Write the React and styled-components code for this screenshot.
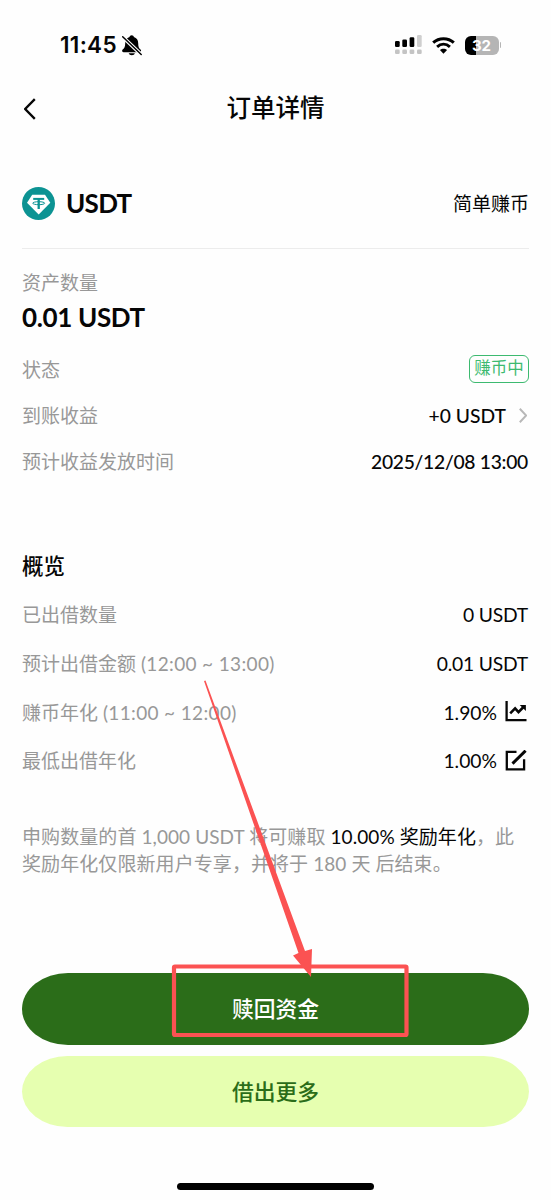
import React from "react";
import styled, { createGlobalStyle } from "styled-components";

const GlobalStyle = createGlobalStyle`
  * {
    box-sizing: border-box;
  }

  body {
    margin: 0;
    background: #fefefe;
    color: #060606;
    font-family: Lato, "Noto Sans CJK SC", sans-serif;
  }
`;

const Screen = styled.div`
  position: relative;
  display: flex;
  flex-direction: column;
  width: 551px;
  height: 1200px;
  padding: 0 22px;
  overflow: hidden;
`;

const StatusBar = styled.div`
  display: flex;
  align-items: center;
  justify-content: space-between;
  height: 90px;
  padding: 0 28px 0 38px;
`;

const StatusGroup = styled.div`
  display: flex;
  align-items: center;
  gap: ${(props) => props.$gap}px;
`;

const Time = styled.span`
  font-family: Inter, sans-serif;
  font-size: 22.5px;
  font-weight: 600;
  letter-spacing: 0.3px;
  line-height: 28px;
`;

const Battery = styled.div`
  display: flex;
  align-items: center;
  justify-content: center;
  width: 34px;
  height: 19px;
  border-radius: 6px;
  background: linear-gradient(to right, #000 11px, #b5b5b5 11px);
  color: #fff;
  font-family: Inter, sans-serif;
  font-size: 15px;
  font-weight: 700;
`;

const BatteryTip = styled.div`
  width: 1.5px;
  height: 6px;
  margin-left: 1px;
  border-radius: 0 2px 2px 0;
  background: #b5b5b5;
`;

const BatteryGroup = styled.div`
  display: flex;
  align-items: center;
`;

const NavBar = styled.header`
  display: grid;
  grid-template-columns: 60px 1fr 60px;
  align-items: center;
  height: 36px;
  margin-bottom: 32px;
`;

const BackButton = styled.button`
  display: flex;
  padding: 1px 0 0 2px;
  border: 0;
  background: none;
`;

const PageTitle = styled.h1`
  margin: 0;
  font-size: 24.5px;
  font-weight: 500;
  line-height: 34px;
  text-align: center;
`;

const AssetHeader = styled.div`
  display: flex;
  align-items: center;
  height: 91px;
  border-bottom: 1px solid #ececec;
`;

const AssetName = styled.span`
  flex: 1;
  margin-left: 11px;
  font-size: 26px;
  font-weight: 700;
  letter-spacing: -0.7px;
`;

const ProductName = styled.span`
  padding-bottom: 2px;
  font-size: 19px;
`;

const Label = styled.span`
  color: #989898;
  font-size: 19px;
`;

const TimeRange = styled.span`
  letter-spacing: 0.35px;
`;

const AmountBlock = styled.div`
  display: flex;
  flex-direction: column;
  margin: 20px 0 9px;

  ${Label} {
    line-height: 28px;
  }
`;

const Amount = styled.span`
  font-size: 26px;
  font-weight: 700;
  letter-spacing: -0.35px;
  line-height: 40px;
`;

const Rows = styled.div`
  display: flex;
  flex-direction: column;

  ${Label} {
    padding-bottom: 2px;
  }
`;

const Row = styled.div`
  display: flex;
  align-items: center;
  justify-content: space-between;
  height: ${(props) => props.$height}px;
`;

const Value = styled.span`
  display: flex;
  align-items: center;
  gap: ${(props) => props.$gap || 8}px;
  padding-right: ${(props) => props.$inset || 1}px;
  font-size: 19.3px;
  font-weight: ${(props) => props.$weight || 400};
  letter-spacing: ${(props) => props.$spacing || 0}px;
`;

const Badge = styled.span`
  height: 28px;
  width: 60px;
  border: 1.5px solid #3dba70;
  border-radius: 6px;
  color: #3dba70;
  font-size: 16.5px;
  line-height: 25px;
  text-align: center;
`;

const SectionTitle = styled.h2`
  margin: 64px 0 8px;
  font-size: 21.5px;
  font-weight: 500;
  line-height: 34px;
`;

const Note = styled.p`
  height: 54px;
  margin: 38px 0 96px;
  color: #989898;
  font-size: 19px;
  letter-spacing: 0.08px;
  line-height: 27px;
  white-space: nowrap;
`;

const Strong = styled.span`
  color: #060606;
`;

const Actions = styled.div`
  display: flex;
  flex-direction: column;
  gap: 11px;
`;

const ActionButton = styled.button`
  height: ${(props) => (props.$primary ? 72 : 71)}px;
  padding: 0 0 3px;
  border: 0;
  border-radius: 46px / 36px;
  background: ${(props) => (props.$primary ? "#2b6d19" : "#e6ffb0")};
  color: ${(props) => (props.$primary ? "#fff" : "#2b6d19")};
  font-family: inherit;
  font-size: 21.8px;
  font-weight: 500;
`;

const HomeIndicator = styled.div`
  align-self: center;
  width: 197px;
  height: 7px;
  margin-top: 56px;
  border-radius: 4px;
  background: #000;
`;

// Red arrow and frame drawn on top of the page
const Annotation = styled.svg`
  position: absolute;
  top: 0;
  left: 0;
  pointer-events: none;
`;

const MutedBell = () => (
  <svg width="20" height="21" viewBox="0 0 20 21">
    <path
      d="M9.700.3c-1.200 0-2 .7-2.200 1.700C4.600 3 3.200 5.200 3.200 8.200c0 3.500-.8 4.900-2.500 6.400-1 .8-.7 2.600.9 2.600h16c1.600 0 1.900-1.800.9-2.600-1.700-1.500-2.300-2.900-2.300-6.400 0-3-1.500-5.200-4.300-6.200C11.700 1 10.900.3 9.700.3z"
      fill="#000"
    />
    <path d="M6.700 18.300h6.200c-.4 1.300-1.500 2-3.100 2S7.100 19.600 6.700 18.300z" fill="#000" />
    <path d="M-.5 .7 20 20.300" stroke="#fefefe" strokeWidth="3.600" />
    <path d="M.7 1.800 19.200 19.500" stroke="#000" strokeWidth="1.500" strokeLinecap="round" />
  </svg>
);

const Signal = () => (
  <svg width="27" height="20" viewBox="0 0 27 20">
    <rect x="0" y="6" width="4.700" height="6" rx="1.300" />
    <rect x="7.300" y="4.500" width="4.700" height="7.500" rx="1.300" />
    <rect x="14.600" y="2.300" width="4.700" height="9.700" rx="1.300" />
    <rect x="22" y="0" width="4.700" height="12" rx="1.300" fill="#cfcfcf" />
    {[0, 7.3, 14.6, 22].map((x) => (
      <rect key={x} x={x} y="14.500" width="4.700" height="4.500" rx="1.300" fill="#c4c4c4" />
    ))}
  </svg>
);

const Wifi = () => (
  <svg width="23" height="17" viewBox="0 0 23 17" fill="none" stroke="#000" strokeWidth="3">
    <path d="M1.200 5.700C7 .3 16 .3 21.800 5.700" />
    <path d="M5.100 9.800C8.900 6.500 14.100 6.500 17.900 9.800" />
    <path d="M11.500 16.700 7.900 13.100C10 11.200 13 11.200 15.100 13.100z" fill="#000" stroke="none" />
  </svg>
);

const Chevron = ({ width, height, color, stroke, flip }) => (
  <svg width={width} height={height} viewBox="0 0 10 20" preserveAspectRatio="none" fill="none">
    <path
      d={flip ? "M1 1l8 9-8 9" : "M9 1l-8 9 8 9"}
      stroke={color}
      strokeWidth={stroke}
      vectorEffect="non-scaling-stroke"
    />
  </svg>
);

const TetherLogo = () => (
  <svg width="33" height="33" viewBox="0 0 33 33">
    <circle cx="16.500" cy="16.500" r="16.500" fill="#0c9393" />
    <path d="M10.200 7.800h12.800l5.300 7.900L16.700 27.500 5 15.700z" fill="#fff" />
    <g fill="none" stroke="#0c9393">
      <path d="M11.200 11.900h11" strokeWidth="2" />
      <path d="M16.700 12v10" strokeWidth="2.300" />
      <ellipse cx="16.700" cy="16.200" rx="6" ry="1.500" strokeWidth="1" />
    </g>
  </svg>
);

const ChartIcon = () => (
  <svg width="22" height="22" viewBox="0 0 22 22" fill="none" stroke="#060606" strokeWidth="2.300">
    <path d="M1.600 0v19.200H21.500" />
    <path d="M5.200 12.300 10.100 7.400l3.400 3.700L19 5.500" strokeWidth="2.600" />
    <path d="M14.700 4h6.200v6z" fill="#060606" stroke="none" />
  </svg>
);

const EditIcon = () => (
  <svg width="22" height="22" viewBox="0 0 22 22" fill="none" stroke="#060606" strokeWidth="2.300">
    <path d="M11.500 1.800H1.800v17.500h17.300V9.200" />
    <path d="M7.500 13.600 20.600.7" strokeWidth="3" />
  </svg>
);

const App = () => {
  return (
    <>
      <GlobalStyle />
      <Screen>
        <StatusBar>
          <StatusGroup $gap={5}>
            <Time>11:45</Time>
            <MutedBell />
          </StatusGroup>
          <StatusGroup $gap={10}>
            <Signal />
            <Wifi />
            <BatteryGroup>
              <Battery>32</Battery>
              <BatteryTip />
            </BatteryGroup>
          </StatusGroup>
        </StatusBar>

        <NavBar>
          <BackButton aria-label="返回">
            <Chevron width={12} height={22} color="#060606" stroke={2.3} />
          </BackButton>
          <PageTitle>订单详情</PageTitle>
        </NavBar>

        <AssetHeader>
          <TetherLogo />
          <AssetName>USDT</AssetName>
          <ProductName>简单赚币</ProductName>
        </AssetHeader>

        <AmountBlock>
          <Label>资产数量</Label>
          <Amount>0.01 USDT</Amount>
        </AmountBlock>

        <Rows>
          <Row $height={46.5}>
            <Label>状态</Label>
            <Badge>赚币中</Badge>
          </Row>
          <Row $height={46.5}>
            <Label>到账收益</Label>
            <Value $gap={13} $inset={2} $weight={500}>
              +0 USDT
              <Chevron width={8} height={15} color="#b8b8b8" stroke={2} flip />
            </Value>
          </Row>
          <Row $height={45.5}>
            <Label>预计收益发放时间</Label>
            <Value $weight={500} $spacing={-0.28}>
              2025/12/08 13:00
            </Value>
          </Row>
        </Rows>

        <SectionTitle>概览</SectionTitle>
        <Rows>
          <Row $height={48.7}>
            <Label>已出借数量</Label>
            <Value $spacing={-0.2}>0 USDT</Value>
          </Row>
          <Row $height={48.7}>
            <Label>
              预计出借金额 <TimeRange>(12:00 ~ 13:00)</TimeRange>
            </Label>
            <Value $spacing={-0.2}>0.01 USDT</Value>
          </Row>
          <Row $height={48.7}>
            <Label>
              赚币年化 <TimeRange>(11:00 ~ 12:00)</TimeRange>
            </Label>
            <Value $inset={2}>
              1.90%
              <ChartIcon />
            </Value>
          </Row>
          <Row $height={48.7}>
            <Label>最低出借年化</Label>
            <Value $inset={2}>
              1.00%
              <EditIcon />
            </Value>
          </Row>
        </Rows>

        <Note>
          申购数量的首 1,000 USDT 将可赚取 <Strong>10.00% 奖励年化</Strong>，此
          <br />
          奖励年化仅限新用户专享，并将于 180 天 后结束。
        </Note>

        <Actions>
          <ActionButton $primary>赎回资金</ActionButton>
          <ActionButton>借出更多</ActionButton>
        </Actions>

        <HomeIndicator />

        <Annotation width="551" height="1200" viewBox="0 0 551 1200">
          <rect
            x="174"
            y="966.500"
            width="232.500"
            height="68.500"
            rx="1"
            fill="none"
            stroke="#fb5252"
            strokeWidth="4.200"
          />
          <path
            d="M204 681l1.500-.5L305 951l7-2-1 28-18-21.500 5.500-2.500z"
            fill="#fb5252"
          />
        </Annotation>
      </Screen>
    </>
  );
};

export default App;
